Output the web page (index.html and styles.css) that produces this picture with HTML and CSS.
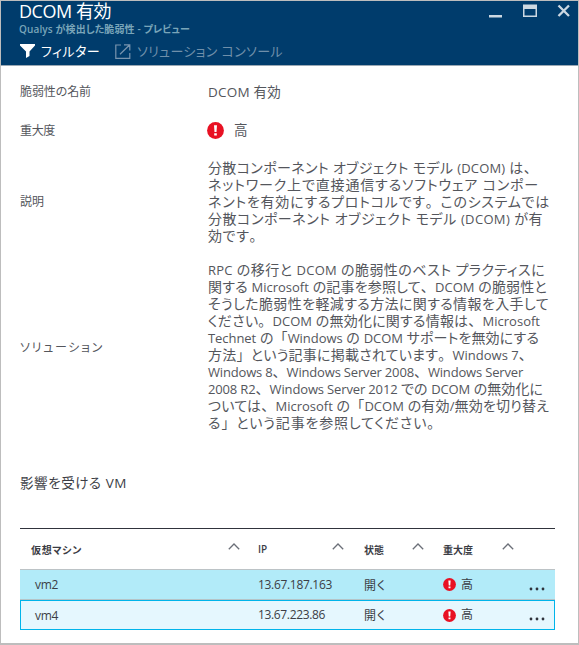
FILE: index.html
```html
<!DOCTYPE html>
<html lang="ja">
<head>
<meta charset="utf-8">
<title>DCOM 有効</title>
<link rel="stylesheet" href="styles.css">
</head>
<body>
<svg class="defs" width="0" height="0">
  <symbol id="alert" viewBox="0 0 17 17"><circle cx="8.5" cy="8.5" r="8.4" fill="#e81123"/><path d="M7 3.3h3l-.5 6.6h-2zM7.2 11.2h2.6v2.2H7.2z" fill="#fff"/></symbol>
  <symbol id="chevron" viewBox="0 0 12 7"><path d="M.8 6.2 6 1l5.200 5.200" fill="none" stroke="#6b6f78" stroke-width="1.3"/></symbol>
  <symbol id="dots" viewBox="0 0 16 4"><g fill="#30333c"><circle cx="2" cy="2" r="1.4"/><circle cx="8" cy="2" r="1.4"/><circle cx="14" cy="2" r="1.4"/></g></symbol>
</svg>
<main class="blade">
  <header class="head">
    <div class="titles">
      <h1><span data-width="92">DCOM 有効</span></h1>
      <p class="subtitle"><span data-width="171">Qualys が検出した脆弱性 - プレビュー</span></p>
      <nav class="commands">
        <svg class="filter" width="15" height="14" viewBox="0 0 15 14"><path d="M0 0h15v1.500L9.500 7.500V12L6 14V7.500L0 1.500z" fill="#fff"/></svg>
        <span class="cmd" data-width="59">フィルター</span>
        <svg class="open" width="16" height="15" viewBox="0 0 16 15"><path d="M6 1H.8v13.300h14V9M9 .8h5.800v5.700M14.500 1 5 10.300" fill="none" stroke="#7894ae" stroke-width="1.200"/></svg>
        <span class="cmd dim" data-width="146">ソリューション コンソール</span>
      </nav>
    </div>
    <svg class="window" width="78" height="16" viewBox="0 0 78 16"><path d="M0 12h13v2.500H0z" fill="#ccd8e2"/><path d="M34 1.500h14V14H34z" fill="#ccd8e2"/><path d="M35.500 6h11v6.500h-11z" fill="#003c6c"/><path d="M69.500 2.500 80 13M80 2.500 69.500 13" stroke="#ccd8e2" stroke-width="2.300"/></svg>
  </header>

  <dl class="details">
    <dt class="r1"><span data-width="71">脆弱性の名前</span></dt>
    <dd class="r1"><span data-width="73">DCOM 有効</span></dd>
    <dt class="r2"><span data-width="35">重大度</span></dt>
    <dd class="r2 severity"><svg width="17" height="17"><use href="#alert"/></svg><span>高</span></dd>
    <dt class="r3"><span data-width="24">説明</span></dt>
    <dd class="r3 prose">
      <p><span data-width="330">分散コンポーネント オブジェクト モデル (DCOM) は、</span></p>
      <p><span data-width="331">ネットワーク上で直接通信するソフトウェア コンポー</span></p>
      <p><span data-width="342">ネントを有効にするプロトコルです。このシステムでは</span></p>
      <p><span data-width="335">分散コンポーネント オブジェクト モデル (DCOM) が有</span></p>
      <p><span data-width="56">効です。</span></p>
    </dd>
    <dt class="r4"><span data-width="84">ソリューション</span></dt>
    <dd class="r4 prose">
      <p><span data-width="337">RPC の移行と DCOM の脆弱性のベスト プラクティスに</span></p>
      <p><span data-width="339">関する Microsoft の記事を参照して、DCOM の脆弱性と</span></p>
      <p><span data-width="341">そうした脆弱性を軽減する方法に関する情報を入手して</span></p>
      <p><span data-width="332">ください。DCOM の無効化に関する情報は、Microsoft</span></p>
      <p><span data-width="331">Technet の「Windows の DCOM サポートを無効にする</span></p>
      <p><span data-width="325">方法」という記事に掲載されています。Windows 7、</span></p>
      <p><span data-width="315">Windows 8、Windows Server 2008、Windows Server</span></p>
      <p><span data-width="335">2008 R2、Windows Server 2012 での DCOM の無効化に</span></p>
      <p><span data-width="341">ついては、Microsoft の「DCOM の有効/無効を切り替え</span></p>
      <p><span data-width="234">る」という記事を参照してください。</span></p>
    </dd>
  </dl>

  <h2><span data-width="107">影響を受ける VM</span></h2>

  <section class="table">
    <div class="row labels">
      <div class="cell name"><span data-width="51">仮想マシン</span><svg width="12" height="7"><use href="#chevron"/></svg></div>
      <div class="cell"><span data-width="9">IP</span><svg width="12" height="7"><use href="#chevron"/></svg></div>
      <div class="cell"><span data-width="20">状態</span><svg width="12" height="7"><use href="#chevron"/></svg></div>
      <div class="cell"><span data-width="30">重大度</span><svg width="12" height="7"><use href="#chevron"/></svg></div>
    </div>
    <div class="row item hover">
      <div class="cell name"><span data-width="23">vm2</span></div>
      <div class="cell"><span data-width="74">13.67.187.163</span></div>
      <div class="cell"><span data-width="22">開く</span></div>
      <div class="cell level"><svg width="13" height="13"><use href="#alert"/></svg><span>高</span></div>
      <div class="cell more"><svg width="16" height="4"><use href="#dots"/></svg></div>
    </div>
    <div class="row item selected">
      <div class="cell name"><span data-width="23">vm4</span></div>
      <div class="cell ip"><span data-width="67">13.67.223.86</span></div>
      <div class="cell"><span data-width="22">開く</span></div>
      <div class="cell level"><svg width="13" height="13"><use href="#alert"/></svg><span>高</span></div>
      <div class="cell more"><svg width="16" height="4"><use href="#dots"/></svg></div>
    </div>
  </section>
</main>
<script src="fit.js"></script>
</body>
</html>
```
FILE: fit.js
```js
// In prose, Latin words are set tighter and punctuation keeps its full width.
document.querySelectorAll('.prose span').forEach(function (el) {
  el.innerHTML = el.textContent
    .replace(/[A-Za-z0-9()\/]+( [A-Za-z0-9]+)*/g, '<i>$&</i>')
    .replace(/[、。「」]/g, '<b>$&</b>');
});
// Tracks each marked run of text so that it fills its measured width.
document.querySelectorAll('[data-width]').forEach(function (el) {
  var natural = el.getBoundingClientRect().width;
  var count = Array.from(el.textContent).length;
  el.style.setProperty('--track', (Number(el.dataset.width) - natural) / count + 'px');
});
```
FILE: styles.css
```css
* { box-sizing: border-box; margin: 0; padding: 0; }
body {
  width: 579px;
  height: 645px;
  background: #fff;
  font-family: "Open Sans", "Noto Sans CJK JP", sans-serif;
  font-feature-settings: "palt";
  color: #54565c;
  overflow: hidden;
}
svg { display: block; flex: none; }
.defs { position: absolute; }
span { white-space: nowrap; letter-spacing: var(--track, 0px); }
.blade {
  width: 579px;
  height: 645px;
  border: 1px solid #bdbdbd;
  border-bottom-width: 2px;
}
.head {
  display: flex;
  justify-content: space-between;
  height: 65px;
  background: #003c6c;
  border-bottom: 1px solid #9aa8b4;
  padding: 0 11px 0 18px;
}
h1 { font-size: 18px; font-weight: 400; line-height: 21px; color: #fff; }
.subtitle { font-size: 10px; font-weight: 600; line-height: 15px; color: #79a5b9; }
.commands { display: flex; align-items: center; height: 28px; }
.filter { margin: 0 6px 0 1px; }
.open { margin: 0 6px 0 15px; }
.cmd { font-size: 13px; line-height: 18px; color: #fff; }
.cmd.dim { color: #6f8faa; }
.window { margin: 2px 0 0; overflow: visible; }

.details {
  display: grid;
  grid-template-columns: 188px 1fr;
  grid-template-rows: 38px 38px 102px 191px;
  margin: 7px 0 0 19px;
}
.details dt, .details dd { display: flex; align-items: center; }
dt { font-size: 12px; }
.details .r1 { padding-bottom: 2px; }
dt.r3 { padding-top: 2px; }
dd { font-size: 13.500px; }
.severity { gap: 10px; margin-left: -1px; }
.severity span { margin-top: -2px; }
.details .prose { display: block; font-family: Lato, "Noto Sans CJK JP", sans-serif; font-size: 14px; padding-top: 10px; }
.prose p { line-height: 17px; height: 17px; }
.prose i { font-family: "Open Sans", sans-serif; font-style: normal; font-size: 13px; letter-spacing: calc(var(--track, 0px) - .2px); }
.prose b { font-weight: 400; font-feature-settings: normal; }

h2 { font-size: 13.500px; font-weight: 400; line-height: 20px; color: #3b3d45; margin: 31px 0 0 19px; }

.table { width: 535px; margin: 35px 0 0 19px; border-top: 1px solid #30333c; color: #3b3d45; }
.row { display: grid; grid-template-columns: 238px 106px 79px 86px 26px; }
.cell { display: flex; align-items: center; }
.labels { height: 41px; border-bottom: 1px solid #bcc3c6; font-size: 10px; font-weight: 600; }
.labels .cell { justify-content: space-between; padding-right: 14px; }
.labels .cell:nth-child(1) { padding: 0 18px 0 11px; }
.labels .cell:nth-child(2) { padding-right: 20px; }
.labels .cell:nth-child(3) { padding-right: 19px; }
.labels .cell:nth-child(4) { padding-right: 15px; }
.labels svg { margin-bottom: 6px; }
.item { height: 30px; font-size: 12px; }
.item .name { padding-left: 15px; }
.hover { background: #b2ebf9; border-bottom: 1px solid #b5c4c8; }
.selected { background: #e5f7fe; box-shadow: inset 0 0 0 1px #00b4ea; }
.ip { padding-bottom: 2px; }
.level { gap: 5px; }
.level span { margin-top: -2px; }
.more { padding-top: 8px; }
```
